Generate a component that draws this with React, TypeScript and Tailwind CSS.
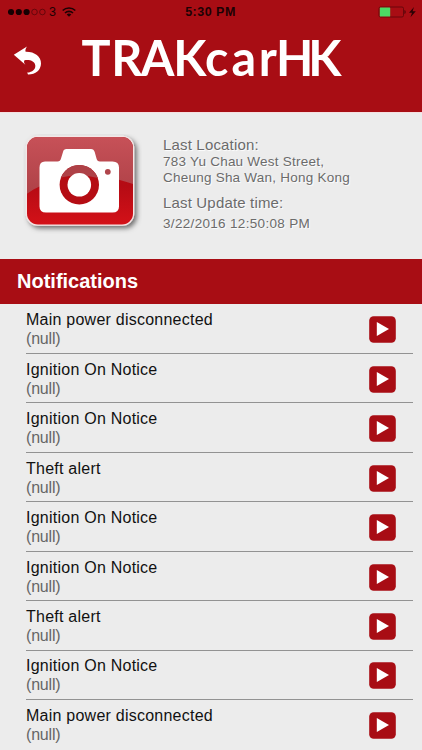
const notifications = [
  "Main power disconnected",
  "Ignition On Notice",
  "Ignition On Notice",
  "Theft alert",
  "Ignition On Notice",
  "Ignition On Notice",
  "Theft alert",
  "Ignition On Notice",
  "Main power disconnected",
];

function StatusBar() {
  return (
    <div className="flex h-6 items-center justify-between pl-2 pr-[5px] text-[#1c0204]">
      <div className="flex w-[160px] items-center">
        <svg className="h-[8px] w-[38px]" viewBox="0 0 38 8">
          <circle cx="3" cy="4" r="3.1" fill="#160002" />
          <circle cx="10.8" cy="4" r="3.1" fill="#160002" />
          <circle cx="18.6" cy="4" r="3.1" fill="#160002" />
          <circle cx="26.5" cy="4" r="2.8" fill="none" stroke="#4a0508" strokeWidth="0.7" />
          <circle cx="34.4" cy="4" r="2.8" fill="none" stroke="#4a0508" strokeWidth="0.7" />
        </svg>
        <span className="ml-[3px] text-[12.5px] leading-6">3</span>
        <svg className="ml-[6px] h-[10px] w-[14px]" viewBox="0 0 14 10">
          <path d="M0.7 3.5A9 9 0 0 1 13.3 3.5" fill="none" stroke="#1c0204" strokeWidth="1.6" />
          <path d="M3 6A5.8 5.8 0 0 1 11 6" fill="none" stroke="#1c0204" strokeWidth="1.6" />
          <path d="M7 9.8L4.7 7.5A3.4 3.4 0 0 1 9.3 7.5Z" fill="#1c0204" />
        </svg>
      </div>
      <span className="mr-[4px] text-[12.5px] font-bold leading-6 tracking-[0.5px]">5:30 PM</span>
      <div className="flex w-[160px] items-center justify-end">
        <svg className="h-[12px] w-[39px]" viewBox="0 0 39 12">
          <rect x="1" y="1" width="24.5" height="10" rx="1.5" fill="none" stroke="#5a0609" strokeWidth="0.8" />
          <rect x="1.8" y="1.6" width="10.4" height="9" rx="0.5" fill="#4cd964" />
          <path d="M26.5 4C28 4.5 28 7.5 26.5 8Z" fill="#3c0406" />
          <path d="M36 1L31 6.8H34L32.5 11.2L37.8 5.2H34.6Z" fill="#2a0204" />
        </svg>
      </div>
    </div>
  );
}

function Header() {
  return (
    <header className="h-[112px] bg-[#a80d14]">
      <StatusBar />
      <div className="flex items-start">
        <button className="ml-[13px] mt-[22px]" aria-label="Back">
          <svg className="block h-[30px] w-[29px]" viewBox="0 0 29 30">
            <path
              d="M0.8 8.8L14 0.6C12.5 2.8 12.1 4.4 12.6 5.7C21.5 5.5 28.2 10.3 28 17.5C27.9 24.2 22.5 28.6 15 28.5L14.2 26.6C19.5 26 22.6 23.3 22.3 19.4C21.9 15.5 17.4 13.4 11.5 14.2C10.6 15.6 11.1 17.1 12.4 18.8Z"
              fill="#fff"
            />
          </svg>
        </button>
        <svg className="ml-[34px] mt-[2px] h-[70px] w-[280px] overflow-visible" viewBox="76 26 280 70">
          <text
            x="84.9 115.8 146.7 180.5 213.5 241.1 269.5 287.5 321.1"
            y="76.5"
            transform="scale(0.96 1)"
            fill="#fff"
            fontFamily="Lato, sans-serif"
            fontWeight="700"
            fontSize="50.5"
          >
            TRAKcarHK
          </text>
        </svg>
      </div>
    </header>
  );
}

function CameraButton() {
  return (
    <svg className="ml-[23px] mt-[21px] h-[100px] w-[119px]" viewBox="23 133.5 119 100">
      <defs>
        <linearGradient id="base" x1="0" y1="0" x2="0" y2="1">
          <stop offset="0" stopColor="#b9141b" />
          <stop offset="0.55" stopColor="#b50b14" />
          <stop offset="1" stopColor="#d41118" />
        </linearGradient>
        <linearGradient id="gloss" x1="0" y1="0" x2="0" y2="1">
          <stop offset="0" stopColor="#c75158" />
          <stop offset="1" stopColor="#ae4147" />
        </linearGradient>
        <clipPath id="plate">
          <rect x="27" y="136.5" width="106" height="87.5" rx="11" />
        </clipPath>
        <filter id="shadow" x="-10%" y="-10%" width="125%" height="130%">
          <feDropShadow dx="2.5" dy="2.5" stdDeviation="2.5" floodColor="#000" floodOpacity="0.55" />
        </filter>
      </defs>
      <rect x="25.8" y="135.3" width="108.4" height="90" rx="12" fill="#f4e6e6" filter="url(#shadow)" />
      <g clipPath="url(#plate)">
        <rect x="26" y="136" width="108" height="89" fill="url(#base)" />
        <path d="M26 136H134V184C105 172 55 172 26 194Z" fill="url(#gloss)" />
      </g>
      <path
        d="M45 161H57.5C59.5 161 60.5 160 61 158L63 151.5C63.6 149.3 64.5 148.5 66.5 148.5H91C93 148.5 94 149.5 94.7 151.5L96.5 158C97 160 98 161 100 161H112.5Q119 161 119 167V206Q119 212 112.5 212H46Q39.5 212 39.5 206V167Q39.5 161 45 161Z"
        fill="#fff"
      />
      <circle cx="79.3" cy="184.3" r="19.7" fill="#b50d14" />
      <path d="M61 177A19.7 19.7 0 0 1 97.8 177.5Q79 173 61 177Z" fill="#ae4147" />
      <circle cx="79.3" cy="184.3" r="11.8" fill="#fff" />
      <circle cx="107.8" cy="171.3" r="2.9" fill="#b0454b" />
    </svg>
  );
}

function PlayIcon() {
  return (
    <svg className="mt-[2px] h-[27px] w-[27px]" viewBox="0 0 27 27">
      <rect x="0.2" y="0.2" width="26.6" height="26.6" rx="4.5" fill="#a80d14" />
      <path d="M7.8 6L20 13L7.8 20Z" fill="#fff" />
    </svg>
  );
}

export default function App() {
  return (
    <main className="h-[750px] overflow-hidden bg-[#ececec] font-['Liberation_Sans',Arial,sans-serif]">
      <Header />
      <section className="flex h-[147px] border-t border-[#f5dfe0]">
        <CameraButton />
        <div className="ml-[21px] pt-[22px] text-[#6b6b6b] [text-shadow:1px_1px_1px_#fff]">
          <p className="text-[15px] leading-[19px] tracking-[0.17px]">Last Location:</p>
          <p className="text-[13.5px] leading-4 tracking-[0.23px]">783 Yu Chau West Street,</p>
          <p className="text-[13.5px] leading-4 tracking-[0.23px]">Cheung Sha Wan, Hong Kong</p>
          <p className="mt-[8px] text-[15px] leading-[18px] tracking-[0.17px]">Last Update time:</p>
          <p className="mt-[4px] text-[13.5px] leading-4 tracking-[0.32px]">3/22/2016 12:50:08 PM</p>
        </div>
      </section>
      <h2 className="h-[45px] bg-[#a80d14] pl-[17px] text-[20px] font-bold leading-[45px] text-white">
        Notifications
      </h2>
      <ul className="pl-[26px] pr-[9px] pt-[0.6px]">
        {notifications.map((title, i) => (
          <li
            key={i}
            className="flex h-[49.45px] items-center justify-between border-b border-[#929292] pr-[17px] last:border-transparent"
          >
            <div className="pt-[1px]">
              <p className="text-[16px] leading-[19px] tracking-[0.24px] text-[#111]">{title}</p>
              <p className="text-[16px] leading-[19px] tracking-[-0.2px] text-[#666]">(null)</p>
            </div>
            <PlayIcon />
          </li>
        ))}
      </ul>
    </main>
  );
}
